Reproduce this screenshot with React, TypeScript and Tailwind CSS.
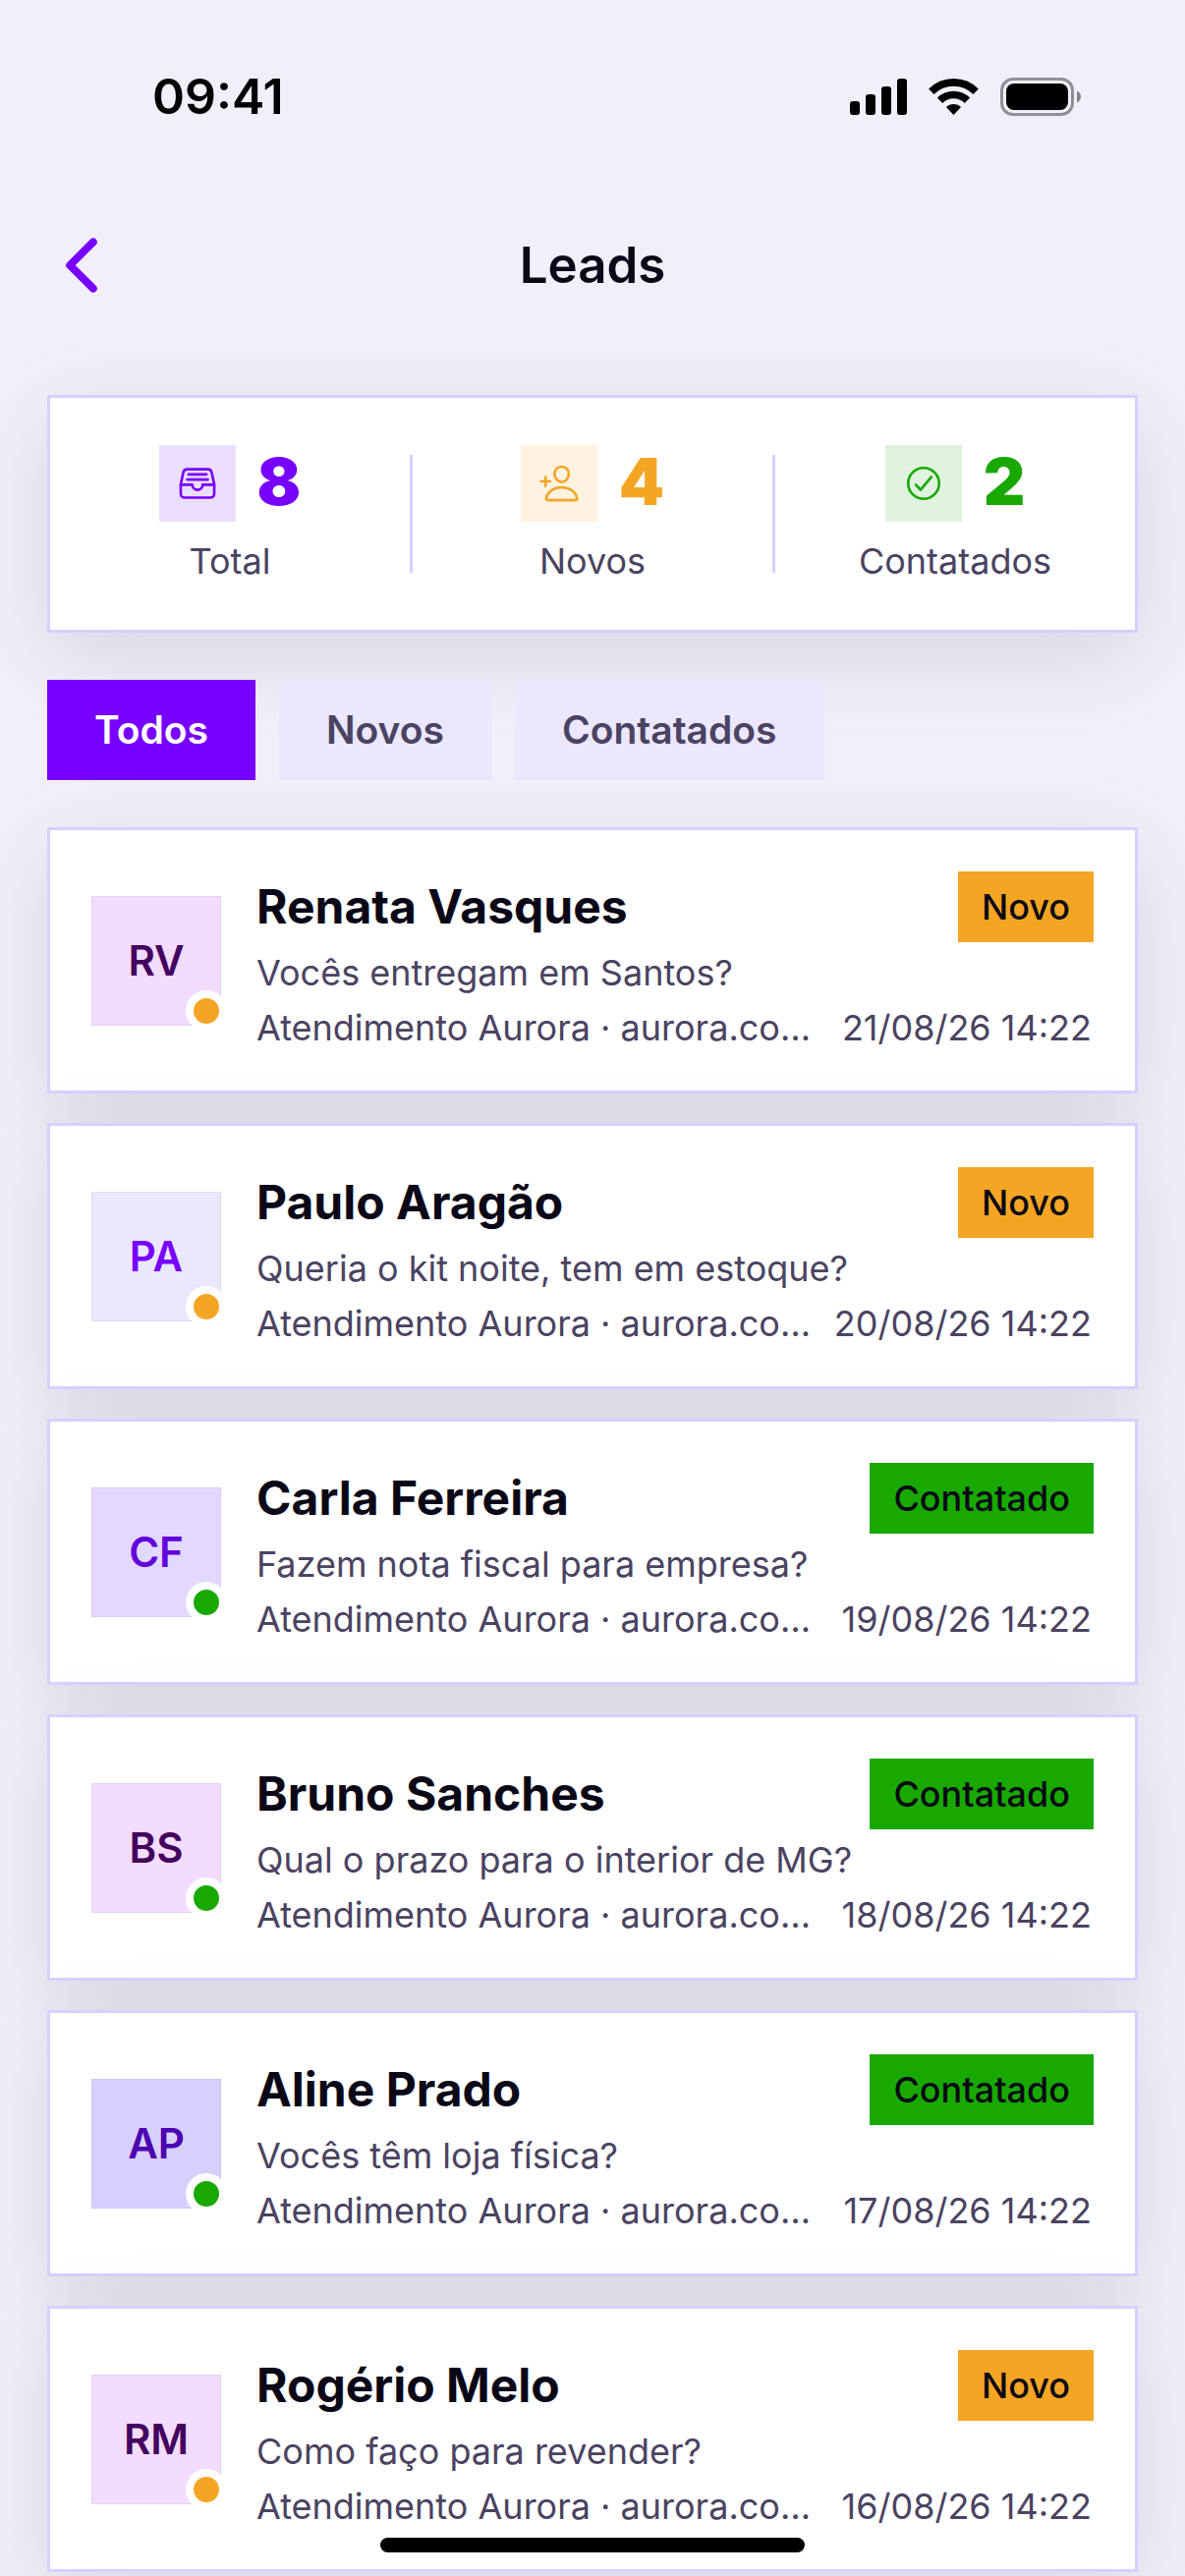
import {
  IoCheckmarkCircleOutline,
  IoChevronBack,
  IoFileTrayFullOutline,
  IoPersonAddOutline,
} from "react-icons/io5";

const stats = [
  { label: "Total", value: 8, icon: IoFileTrayFullOutline, box: "bg-[#ecdeff]", color: "text-[#7700ff]" },
  { label: "Novos", value: 4, icon: IoPersonAddOutline, box: "bg-[#fef2e1]", color: "text-[#f5a524]" },
  { label: "Contatados", value: 2, icon: IoCheckmarkCircleOutline, box: "bg-[#dff3de]", color: "text-[#18a800]" },
];

const filters = ["Todos", "Novos", "Contatados"];

const pink = "bg-[#f2dcff] text-[#44005f]";

const leads = [
  { initials: "RV", name: "Renata Vasques", message: "Vocês entregam em Santos?", date: "21/08/26 14:22", contacted: false, avatar: pink },
  { initials: "PA", name: "Paulo Aragão", message: "Queria o kit noite, tem em estoque?", date: "20/08/26 14:22", contacted: false, avatar: "bg-[#ebe7ff] text-[#7700ff]" },
  { initials: "CF", name: "Carla Ferreira", message: "Fazem nota fiscal para empresa?", date: "19/08/26 14:22", contacted: true, avatar: "bg-[#e3d8ff] text-[#6200dc]" },
  { initials: "BS", name: "Bruno Sanches", message: "Qual o prazo para o interior de MG?", date: "18/08/26 14:22", contacted: true, avatar: pink },
  { initials: "AP", name: "Aline Prado", message: "Vocês têm loja física?", date: "17/08/26 14:22", contacted: true, avatar: "bg-[#d8cfff] text-[#4c00b0]" },
  { initials: "RM", name: "Rogério Melo", message: "Como faço para revender?", date: "16/08/26 14:22", contacted: false, avatar: pink },
];

function StatusBar() {
  return (
    <div className="flex h-[186px] items-start justify-between pt-[66px] pr-[106px] pl-[155px] text-black">
      <span className="text-[50px] leading-[64px] font-semibold">09:41</span>
      <div className="flex h-16 items-center gap-[22px]">
        <svg width="58" height="37" viewBox="0 0 58 37" fill="currentColor">
          <rect x="0" y="23" width="10" height="14" rx="3" />
          <rect x="16" y="16" width="10" height="21" rx="3" />
          <rect x="32" y="8" width="10" height="29" rx="3" />
          <rect x="48" y="0" width="10" height="37" rx="3" />
        </svg>
        <svg width="51" height="37" viewBox="0 0 51 37" fill="none" stroke="currentColor">
          <path d="M2.8 13.2a32.2 32.2 0 0 1 45.4 0" strokeWidth="7.6" />
          <path d="M11.6 22.2a19.7 19.7 0 0 1 27.8 0" strokeWidth="7.6" />
          <path d="M25.5 37l-7.6-7.9a10.8 10.8 0 0 1 15.2 0z" fill="currentColor" stroke="none" />
        </svg>
        <svg width="82" height="39" viewBox="0 0 82 39">
          <rect x="1.5" y="1.5" width="72" height="36" rx="11.5" fill="none" stroke="#000" strokeOpacity=".4" strokeWidth="3" />
          <rect x="6" y="6" width="63" height="27" rx="8" />
          <path d="M78 13.5v12c2.4-1 4-3.3 4-6s-1.6-5-4-6z" fillOpacity=".45" />
        </svg>
      </div>
    </div>
  );
}

function Stats() {
  return (
    <section className="flex items-center border-3 border-[#d8cfff] bg-white py-12 shadow-[0_24px_90px_rgba(10,10,20,0.11)]">
      {stats.map(({ label, value, icon: Icon, box, color }, i) => (
        <div key={label} className="contents">
          {i > 0 && <div className="h-[120px] w-[3px] bg-[#d8cfff]" />}
          <div className="flex flex-1 flex-col items-center gap-[18px]">
            <div className={`flex items-start gap-[22px] ${color}`}>
              <div className={`flex size-[78px] items-center justify-center ${box}`}>
                <Icon size={42} />
              </div>
              <span className="text-[66px] leading-[75px] font-black">{value}</span>
            </div>
            <span className="text-4xl leading-[44px] text-[#4a4361]">{label}</span>
          </div>
        </div>
      ))}
    </section>
  );
}

function LeadCard({ lead }: { lead: (typeof leads)[number] }) {
  const statusColor = lead.contacted ? "bg-[#18a800]" : "bg-[#f5a524]";

  return (
    <li className="flex items-center gap-9 border-3 border-[#d8cfff] bg-white p-[42px] shadow-[0_24px_90px_rgba(10,10,20,0.11)]">
      <div className={`relative flex size-[132px] shrink-0 items-center justify-center border border-black/5 text-[42px] font-semibold ${lead.avatar}`}>
        {lead.initials}
        <span className={`absolute -right-[7px] -bottom-[7px] size-[42px] rounded-full border-8 border-white ${statusColor}`} />
      </div>
      <div className="min-w-0 flex-1">
        <div className="flex items-center justify-between gap-6">
          <h2 className="truncate text-5xl leading-[60px] font-bold text-[#0a0817]">{lead.name}</h2>
          <span className={`px-6 text-4xl leading-[72px] font-medium text-[#0a0817] ${statusColor}`}>
            {lead.contacted ? "Contatado" : "Novo"}
          </span>
        </div>
        <p className="mt-[9px] truncate text-4xl leading-[44px] text-[#4a4361]">{lead.message}</p>
        <div className="mt-3 flex justify-between gap-4 pr-0.5 text-4xl leading-[44px] text-[#4a4361]">
          <p className="truncate">Atendimento Aurora · aurora.co…</p>
          <time className="shrink-0">{lead.date}</time>
        </div>
      </div>
    </li>
  );
}

export default function App() {
  return (
    <div className="min-h-screen bg-[#f1effa] pb-1 font-['Inter',sans-serif]">
      <StatusBar />
      <header className="grid h-[168px] grid-cols-[84px_1fr_84px] items-center px-[41px]">
        <button type="button" aria-label="Voltar" className="text-[#7700ff]">
          <IoChevronBack size={84} />
        </button>
        <h1 className="text-center text-[51px] leading-[60px] font-semibold text-[#0a0817]">Leads</h1>
      </header>
      <main className="px-12 pt-12">
        <Stats />
        <div className="my-12 flex gap-6">
          {filters.map((filter, i) => (
            <button
              key={filter}
              type="button"
              className={`h-[102px] px-12 text-[39px] font-semibold ${i === 0 ? "bg-[#7700ff] text-white" : "bg-[#ebe7ff] text-[#4a4361]"}`}
            >
              {filter}
            </button>
          ))}
        </div>
        <ul className="flex flex-col gap-[30px]">
          {leads.map((lead) => (
            <LeadCard key={lead.name} lead={lead} />
          ))}
        </ul>
      </main>
      <div className="fixed bottom-6 left-1/2 h-[15px] w-[432px] -translate-x-1/2 rounded-full bg-black" />
    </div>
  );
}
